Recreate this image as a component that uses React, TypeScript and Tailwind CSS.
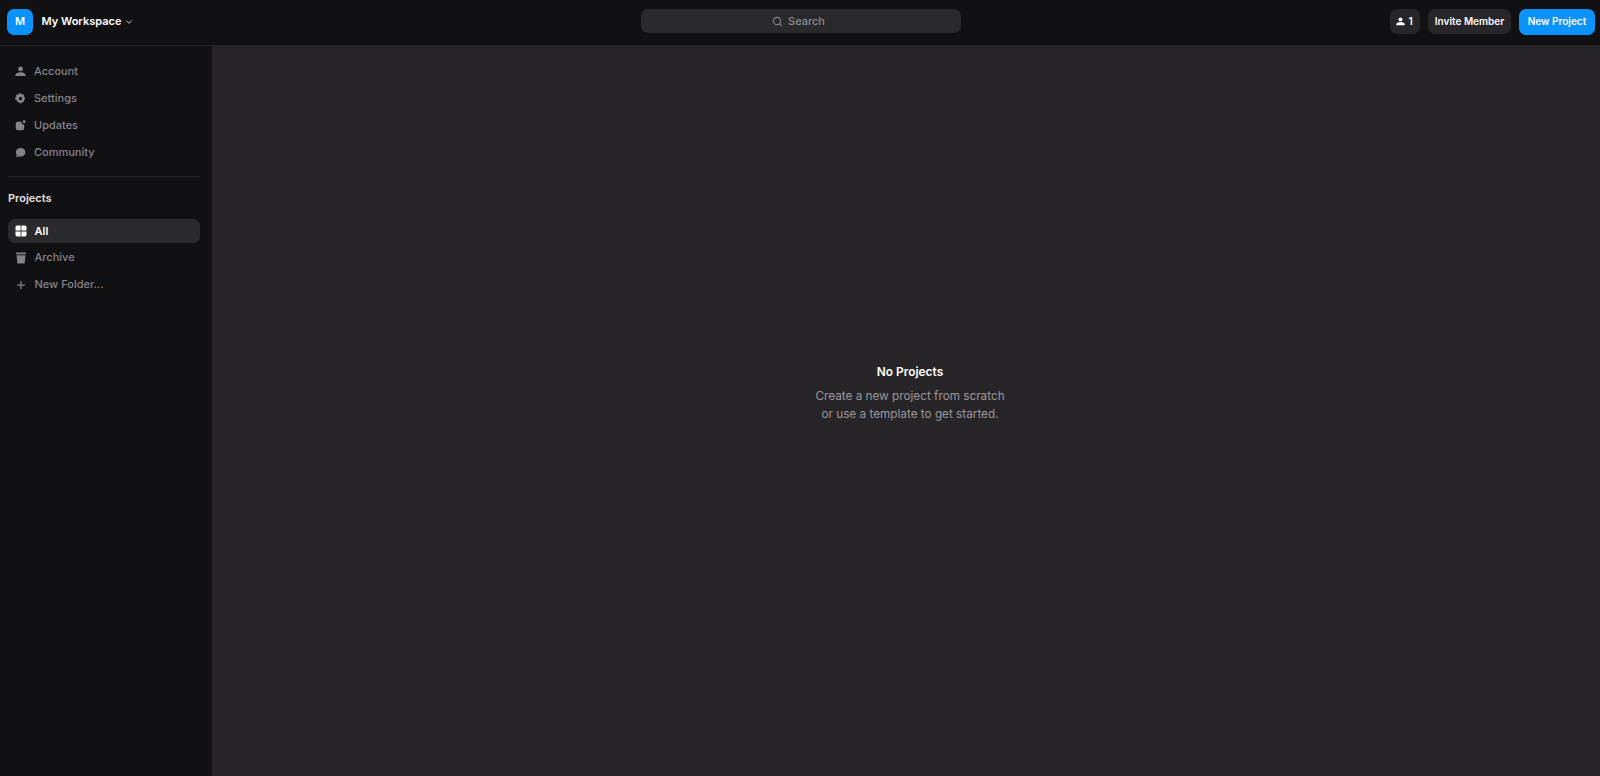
import React from "react";
import { Search, ChevronDown, Plus } from "lucide-react";

const PersonIcon = ({ className }: { className?: string }) => (
  <svg viewBox="0 0 12 12" className={className} fill="currentColor">
    <circle cx="6" cy="3.2" r="2.6" />
    <path d="M1 11c-.4 0-.7-.3-.7-.7C.3 8.2 2.6 6.8 6 6.8s5.700 1.400 5.700 3.500c0 .4-.3.7-.7.7H1z" />
  </svg>
);

const GearIcon = ({ className }: { className?: string }) => (
  <svg viewBox="0 0 12 12" className={className} fill="currentColor">
    <path
      fillRule="evenodd"
      d="M6 .2l1 .3.6 1.200 1.300-.3 1 .9-.3 1.300 1.100.9v2.600l-1.100.9.3 1.300-1 .9-1.300-.3-.6 1.200-1 .3-1-.3-.6-1.200-1.300.3-1-.9.3-1.300L.3 7.300V4.700l1.100-.9-.3-1.300 1-.9 1.300.3.6-1.200 1-.3zM6 4.200a1.800 1.800 0 100 3.600 1.800 1.800 0 000-3.600z"
    />
  </svg>
);

const UpdatesIcon = ({ className }: { className?: string }) => (
  <svg viewBox="0 0 12 12" className={className} fill="currentColor">
    <circle cx="10" cy="2" r="1.600" />
    <path d="M3 2h4.200c-.2 1.800 1 3.100 2.800 3.100V9a2.200 2.200 0 01-2.200 2.200H3A2.200 2.200 0 01.8 9V4.200A2.200 2.200 0 013 2z" />
  </svg>
);

const ChatIcon = ({ className }: { className?: string }) => (
  <svg viewBox="0 0 12 12" className={className} fill="currentColor">
    <path d="M6.400 1C9.200 1 11.300 3 11.300 5.700S9.200 10.400 6.400 10.400c-.8 0-1.500-.2-2.100-.4-.9.5-2 .9-3.300.8.500-.5.900-1.200 1-2C1.300 8 .9 6.900.9 5.700.9 3 3.600 1 6.400 1z" />
  </svg>
);

const GridIcon = ({ className }: { className?: string }) => (
  <svg viewBox="0 0 12 12" className={className} fill="currentColor">
    <path d="M2.200.5h3.400v5.100H.5V2.200C.5 1.300 1.300.5 2.200.5zM6.400.5h3.400c.9 0 1.700.8 1.700 1.700v3.400H6.400V.5zM.5 6.400h5.100v5.100H2.200c-.9 0-1.700-.8-1.700-1.700V6.400zM6.400 6.400h5.100v3.400c0 .9-.8 1.700-1.700 1.700H6.400V6.400z" />
  </svg>
);

const TrashIcon = ({ className }: { className?: string }) => (
  <svg viewBox="0 0 12 12" className={className} fill="currentColor">
    <rect x="1" y="0.500" width="10" height="1.800" rx="0.500" />
    <path d="M1.600 3.300h8.800l-.6 7.200c0 .6-.5 1-1 1H3.200c-.5 0-1-.4-1-1l-.6-7.200z" />
  </svg>
);

const NavRow = ({ icon, label }: { icon: React.ReactNode; label: string }) => (
  <div className="mb-[3px] flex h-6 items-center gap-[8px] pl-[6px] text-[#86838a]">
    <span className="flex w-[12px] justify-center">{icon}</span>
    <span className="text-[11px] font-medium">{label}</span>
  </div>
);

export default function App() {
  return (
    <div
      className="flex h-[776px] w-full flex-col overflow-hidden bg-[#272528]"
      style={{ fontFamily: "Inter, 'Noto Sans', sans-serif" }}
    >
      {/* barra superior */}
      <header className="relative flex h-[46px] shrink-0 items-center justify-between border-b border-[#232226] bg-[#111012] pb-[2px] pl-[7px] pr-[5px]">
        <div className="flex items-center">
          <div className="flex h-[26px] w-[26px] items-center justify-center rounded-[7px] bg-[#0a93ff] text-[11px] font-semibold text-white">
            M
          </div>
          <span className="ml-[8.500px] text-[11px] font-semibold text-white">My Workspace</span>
          <ChevronDown className="ml-[3px] mt-[1px] h-[10px] w-[10px] text-[#a3a1a6]" strokeWidth={2.500} />
        </div>

        <div className="absolute left-[641px] top-[9px] flex h-[24px] w-[320px] items-center justify-center gap-[5px] rounded-[7px] bg-[#2a292c] pr-[5px] text-[#8f8d92]">
          <Search className="h-[11px] w-[11px]" strokeWidth={2.200} />
          <span className="text-[11px] font-medium">Search</span>
        </div>

        <div className="flex items-center">
          <div className="flex h-[25px] w-[30px] items-center justify-center gap-[3px] rounded-[7px] bg-[#272629] pr-[1px] text-[10px] font-semibold text-white">
            <PersonIcon className="h-[9px] w-[9px]" />
            1
          </div>
          <div className="ml-[8px] flex h-[25px] w-[83px] items-center justify-center rounded-[7px] bg-[#272629] text-[10px] font-semibold text-white">
            Invite Member
          </div>
          <div className="ml-[8px] flex h-[26px] w-[76px] items-center justify-center rounded-[7px] bg-[#0a93ff] text-[10px] font-semibold text-white">
            New Project
          </div>
        </div>
      </header>

      <div className="flex min-h-0 flex-1">
        {/* barra lateral */}
        <aside className="flex w-[212px] shrink-0 flex-col bg-[#111012] px-[8px] pt-[13px]">
          <NavRow icon={<PersonIcon className="h-[11px] w-[11px]" />} label="Account" />
          <NavRow icon={<GearIcon className="h-[11px] w-[11px]" />} label="Settings" />
          <NavRow icon={<UpdatesIcon className="h-[11px] w-[11px]" />} label="Updates" />
          <NavRow icon={<ChatIcon className="h-[11px] w-[11px]" />} label="Community" />

          <div className="mt-[9px] h-px w-[192px] bg-[#232226]" />

          <div className="mt-[12px] text-[11px] font-semibold leading-[18px] text-[#e2e1e3]">Projects</div>

          <div className="mb-[2.500px] mt-[12px] flex h-6 w-[192px] items-center gap-[8px] rounded-[7px] bg-[#2b2a2d] pl-[6.500px] text-white">
            <GridIcon className="h-[12px] w-[12px]" />
            <span className="text-[11px] font-semibold">All</span>
          </div>
          <div className="mb-[3px] flex h-6 items-center gap-[8px] pl-[6.500px] text-[#86838a]">
            <TrashIcon className="h-[12px] w-[12px]" />
            <span className="text-[11px] font-medium">Archive</span>
          </div>
          <div className="flex h-6 items-center gap-[8px] pl-[6.500px] text-[#86838a]">
            <Plus className="h-[12px] w-[12px]" strokeWidth={2.500} />
            <span className="text-[11px] font-medium">New Folder...</span>
          </div>
        </aside>

        {/* contenido vacío */}
        <main className="flex flex-1 flex-col items-center pl-[8px] pt-[317px]">
          <h2 className="text-[11.900px] font-semibold leading-[18px] text-white">No Projects</h2>
          <p className="mt-[6px] text-center text-[11.750px] leading-[18px] text-[#9a989d]">
            Create a new project from scratch
            <br />
            or use a template to get started.
          </p>
        </main>
      </div>
    </div>
  );
}
